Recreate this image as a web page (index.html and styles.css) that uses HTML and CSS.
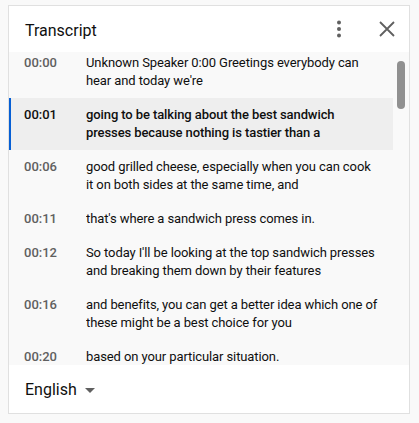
FILE: index.html
```html
<!DOCTYPE html>
<html lang="en">
  <head>
    <meta charset="UTF-8" />
    <title>Transcript</title>
    <link rel="stylesheet" href="styles.css">
  </head>
  <body>
    <div class="panel">
      <div class="header">
        <span class="title">Transcript</span>
        <button class="icon-btn" aria-label="More">
          <svg width="24" height="24" viewBox="0 0 24 24"><circle cx="12" cy="5.5" r="2" fill="#606060"/><circle cx="12" cy="12" r="2" fill="#606060"/><circle cx="12" cy="18.5" r="2" fill="#606060"/></svg>
        </button>
        <button class="icon-btn" aria-label="Close">
          <svg width="24" height="24" viewBox="0 0 24 24"><path d="M5 5 L19 19 M19 5 L5 19" stroke="#606060" stroke-width="1.8" fill="none"/></svg>
        </button>
      </div>

      <div class="body">
        <div class="list">
          <div class="seg">
            <span class="time">00:00</span>
            <span class="text">Unknown Speaker 0:00 Greetings everybody can<br>hear and today we're</span>
          </div>
          <div class="seg active">
            <span class="time">00:01</span>
            <span class="text">going to be talking about the best sandwich<br>presses because nothing is tastier than a</span>
          </div>
          <div class="seg">
            <span class="time">00:06</span>
            <span class="text">good grilled cheese, especially when you can cook<br>it on both sides at the same time, and</span>
          </div>
          <div class="seg">
            <span class="time">00:11</span>
            <span class="text">that's where a sandwich press comes in.</span>
          </div>
          <div class="seg">
            <span class="time">00:12</span>
            <span class="text">So today I'll be looking at the top sandwich presses<br>and breaking them down by their features</span>
          </div>
          <div class="seg">
            <span class="time">00:16</span>
            <span class="text">and benefits, you can get a better idea which one of<br>these might be a best choice for you</span>
          </div>
          <div class="seg">
            <span class="time">00:20</span>
            <span class="text">based on your particular situation.</span>
          </div>
        </div>
        <div class="scroll-thumb"></div>
      </div>

      <div class="footer">
        <span class="lang">English</span>
        <span class="caret"></span>
      </div>
    </div>
  </body>
</html>
```

FILE: styles.css
```css
body{
  margin: 0;
  background: #f9f9f9;
  font-family: Roboto, "Noto Sans", sans-serif;
  color: #0f0f0f;
}
.panel{
  margin: 5px 9px 0 8px;
  height: 407px;
  border: 1px solid #e0e0e0;
  background: #fff;
  display: flex;
  flex-direction: column;
}
.header{
  height: 46px;
  display: flex;
  align-items: center;
  padding: 0 2px 0 16px;
}
.title{
  flex: 1;
  font-size: 16px;
  padding-top: 2px;
}
.icon-btn{
  width: 40px;
  height: 40px;
  border: 0;
  padding: 0;
  background: transparent;
  display: flex;
  align-items: center;
  justify-content: center;
  margin-left: 8px;
  cursor: pointer;
}
.body{
  position: relative;
  height: 313px;
  overflow: hidden;
  background: #f9f9f9;
}
.list{
  margin-top: -6px;
  width: 384px;
}
.seg{
  display: flex;
  padding: 8px 0 8px 13px;
  font-size: 13px;
  line-height: 18px;
  letter-spacing: -0.1px;
  border-left: 3px solid transparent;
  margin-left: -1px;
}
.seg.active{
  background: #eeeeee;
  border-left-color: #065fd4;
  font-weight: 500;
}
.time{
  width: 62px;
  flex: none;
  color: #606060;
  font-weight: 500;
  letter-spacing: 0;
}
.seg.active .time{
  color: #0f0f0f;
}
.text{
  flex: 1;
  white-space: nowrap;
  overflow: hidden;
}
.scroll-thumb{
  position: absolute;
  right: 4px;
  top: 9px;
  width: 8px;
  height: 48px;
  border-radius: 4px;
  background: #909090;
}
.footer{
  flex: 1;
  display: flex;
  align-items: center;
  padding: 0 16px;
}
.lang{
  font-size: 16px;
}
.caret{
  margin-left: 8px;
  margin-top: 2px;
  border-left: 5px solid transparent;
  border-right: 5px solid transparent;
  border-top: 5px solid #606060;
}
```
